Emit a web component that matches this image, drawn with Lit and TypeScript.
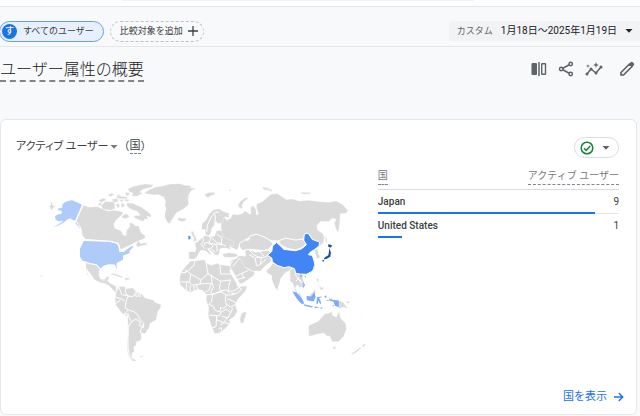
import { LitElement, html, css, svg } from "lit";
import { customElement } from "lit/decorators.js";

interface Row {
  country: string;
  users: number;
}

const ROWS: Row[] = [
  { country: "Japan", users: 9 },
  { country: "United States", users: 1 },
];

/* Land areas, grouped by region; every region has its own origin. */
@customElement("world-map")
export class WorldMap extends LitElement {
  static styles = css`
    :host { display: block; }
    svg { display: block; width: 100%; height: auto; }
    .land { fill: #dadada; }
    .soft { fill: #aecbfa; }
    .mid { fill: #7baaf7; }
    .strong { fill: #4285f4; }
    .deep { fill: #174ea6; }
    .edge { fill: none; stroke: #fff; stroke-width: 3; stroke-linejoin: round; }
    .land, .strong, .soft { stroke: #fff; stroke-width: 1; stroke-linejoin: round; }
    .rim { stroke: #fff; stroke-width: 3; }
  `;

  render() {
    return html`<svg viewBox="0 0 990 570" role="img" aria-label="国別アクティブ ユーザー">
      ${this.northAmerica()} ${this.southAmerica()} ${this.asia()} ${this.europe()} ${this.africa()} ${this.oceania()}
    </svg>`;
  }

  private northAmerica() {
    return svg`
      <path class="land" d="M27 94l6-4 0-10 4 2 0 8 9 4-7 5-2 7-5-2-1-6z"/>
      <path class="soft" d="M127 89L106 138 99 136 92 131 82 135 72 143 58 151 38 158 62 144 69 138 55 140 46 133 45 124 52 119 64 117 66 109 55 106 53 100 66 99 67 88 78 80 96 75 112 82z"/>
      <path class="soft" d="M108 140l8 5 5 19-6-9-8-9z"/>
      <path class="land rim" d="M130 90L150 96 172 94 190 102 205 108 222 105 240 108 252 112 246 122 230 136 223 148 226 160 245 167 251 180 258 182 260 166 270 155 268 143 278 144 286 152 297 152 305 172 318 184 316 192 298 199 285 205 272 212 242 226 236 206 215 200 136 194 127 182 122 158 108 139z"/>
      <path class="land" d="M296 198l6 8 16-2 6 6-14 2-18 5-3-7zM176 76l16-7 8 6-16 8zM184 92l12-12 28 1 2 20-14 5-22-3zM176 86l10-4-2 10-8 0zM202 60l14-5 8 4-12 6zM216 74l16-4 4 10-14 4zM232 58l14 2-12 5zM238 74l14 0-6 8zM254 72l14 2-2 6-10-2zM228 88l10-2 2 10-6 4zM244 86l8-1 4 10-10 3zM230 62l16 2 20 2-8 6-26-2z"/>
      <path class="land" d="M264 42l18-8 34-7 26 2-6 8-26 6-10 8 10 3-18 10-16-1 4-8-10-4zM258 52l14 3-8 8-6-2z"/>
      <path class="land" d="M262 84l18 1 12 6 14 6 16 12 12 10 0 8-12-3 4 10-10-2-6 8-14-6-14-6 4-6 16 0-8-12-18-6-10-6-6-8z"/>
      <path class="land" d="M246 124l12-8 12 8-8 6-10 2z"/>
      <path class="soft rim" d="M131 197L210 200 233 206 239 220 240 230 253 230 262 222 277 212 283 214 277 223 270 229 272 234 264 239 252 243 251 256 232 266 232 287 228 284 225 271 208 270 192 274 184 284 176 278 170 270 152 268 138 262 128 260 119 246 119 222z"/>
      <path class="land rim" d="M136 263l15 4 18 3 12 14-3 14 5 15 12 0 6-8 10 0-6 13 3 9 10 2-3 8-15-7-21-6-16-8-6-10-8-11-8-10 4 14 8 16-4-2-9-15z"/>
      <path class="land" d="M208 302l14-6 20 7 10 4-6 2-24-8zM254 310l12 0 6 4-16 3zM188 318l12-2 12 10 18 10-1 14 12 10-6 0-14-12-14-16-10-4z"/>
      <path class="land" d="M313 55l17-11 18-8 22-3 22-6 30-1 14 5 22 2-8 5 20 3-14 6-8 12-2 14 2 14-6 8-14 10-16 8-10 14-8 14-4 6-8-6-6-13 0-12 4-14-4-10 2-14-6-12-16-7-14 1z"/>
      <path class="land" d="M414 130l7-3 4 4 14-2 1 7-12 5-12-4z"/>
      <path class="land" d="M2 300l5 4-4 4z"/>`;
  }

  private southAmerica() {
    return svg`<g transform="translate(120 270)">
      <path class="land" d="M110 82L118 66 134 66 138 72 160 70 168 80 188 90 196 100 220 106 228 114 244 120 243 130 234 142 230 166 212 176 208 190 196 208 184 208 186 222 180 230 170 232 170 242 162 248 164 260 156 268 158 280 172 290 160 290 150 280 144 266 142 240 145 210 144 190 143 156 128 148 118 134 108 122 106 102z"/>
      <path class="land" d="M180 276l10-2 0 4-8 1z"/>
      <path class="edge" d="M118 68l8 22 20 4-6 14-4 22 10 6-14 14 14-2-4 15 4 30-1 30 0 28 4 20 10 14M108 98l16 4 12 8M108 118l14-12M140 70l-4 12 8 12 16 2 8-12M170 82l-2 12 6 2 4-12M182 88l-2 10M146 136l18 6 14 14 0 6 14 14 0 14-12-6 2-12-14-8-12 8-6-10-4-10M156 170l-10 18M192 178l-8 16-2 10 14 6"/>
    </g>`;
  }

  private asia() {
    return svg`<g transform="translate(630 0)">
      <path class="land" d="M-90 108L-76 110-62 118-60 127-76 126-68 136-56 130-50 118-36 120-20 116-12 108 0 118 6 116 4 98 12 92 20 104 22 120 28 118 22 100 22 88 40 80 58 64 66 58 84 56 100 66 112 74 130 72 150 78 180 76 210 80 240 82 262 78 280 88 298 108 290 116 274 116 272 150 268 174 260 160 256 144 262 134 250 130 240 140 215 140 204 152 206 166 222 176 226 190 222 206 212 212 206 200 190 196 182 178 170 178 162 192 140 196 110 190 86 198 62 196 44 186 20 178 4 184-28 206-36 226-62 214-72 200-84 188-84 165-86 140-82 125z"/>
      <path class="land" d="M-34 92l8-14 16-10 8 2-14 10-6 12 2 8-8 0zM40 36l14 2 16 8-6 3-22-6zM156 52l28 1-2 5-24-1zM228 178l6 16 1 14-5-10z"/>
      <path class="land rim" d="M-30 206L-14 196-2 196 2 184 22 178 44 186 64 198 72 208 58 224 44 228 26 226-4 224-18 228-28 220z"/>
      <path class="land rim" d="M88 198l22-8 30 6 20-3 12 13-12 12-20 8-28-6-16-8z"/>
      <path class="land rim" d="M-14 226l14-2 20 8 22-4 14-2 10 6-10 8 10 10 0 12-20 14-12 14-24 0-26-14-12-18-12-12 14-4 14 2z"/>
      <path class="land rim" d="M50 288l12-10 8-14 14 8 20 6 16-2 14 4-6 14-10-4-12 8-10 14-4 14-6 20-8-4-10-24-2-16-10-4z"/>
      <path class="land rim" d="M122 286l12-10 8 18 8 6 12-2 0 12 4 16-6 12-8 2-8-8-4 8 8 20-8-4-6-18-4-12-8-6z"/>
      <path class="edge" d="M-2 224l18 18 20 8M0 240l18 10 4 24M22 248l24 0 12-8M36 250l-2 18M24 274l14-8 14-14M138 298l8 12 10 12M140 320l8-8 10 14M30 230l14 14"/>
      <path class="strong rim" d="M82 203L96 215 104 224 140 228 158 222 172 210 164 196 166 177 178 176 190 194 212 202 210 214 196 225 184 232 178 240 190 242 196 262 198 274 190 290 172 299 152 298 140 296 136 282 120 276 105 279 84 272 70 262 68 250 55 242 68 230 70 214z"/>
      <path class="strong" d="M152 299l7 2-4 5zM167 303l4 2-3 6z"/>
      <path class="land" d="M196 226l10-4 2 14 6 12-10 4-4-12zM194 274l4 6-4 8z"/>
      <path class="deep" d="M238 208l12 4-4 6-8-1zM241 220l5 14-2 12-12 7-8 1 4-6 10-6 2-10zM220 255l6 2-4 6z"/>
    </g>`;
  }

  private europe() {
    return svg`<g transform="translate(390 0)">
      <path class="land" d="M96 164l2-18 12-10 10-20 14-12 16-2 12 8 18 6-2 12-12-2-4 4-3 14-14 2-6-8-2 14-10 8-2 14-8 10-8-4-2-16z"/>
      <path class="land" d="M76 206l12-8 10-10 8-6 14 4 16-2 6-16 14-2 6 20 20 8 12 8 0 10-14 2 4 10-14-4-12 0-8 4 0 12-6 6-8-2-6-8-8-4-2-8-6 2 10 14 0 6-16-14-12-2-6 6-10 18-10 4-12-2 0-22 20 0 2-10z"/>
      <path class="land" d="M158 238l20-4 22 2 6 8-14 4-26 0z"/>
      <path class="land" d="M64 170l8 0 2 10 6 8 2 10-12 2 4-10-6-8zM106 58l12-5 18 0 0 6-14 4-6 6-8-6zM278 36l14 4 6 4-10 2zM298 44l14 2-6 4zM178 44l8 2-6 3z"/>
      <path class="strong" d="M56 184l6-2 2 10-7 3z"/>
      <path class="edge" d="M112 172l2-22 12-24 12-14 12 0M128 168l8-18 2-26-4-12M120 184l4 8-6 14 12 4M100 186l2 14-8 8 12 14M118 202l-14 4 2 8M142 178l16 10-2 20 14 6M126 188l16 16 14 2M118 206l20 2 6 12-2 10M140 208l18 2M132 212l-8 10 14 10M58 228l20 2"/>
    </g>`;
  }

  private africa() {
    return svg`<g transform="translate(390 210)">
      <path class="land" d="M52 62L62 50 78 48 105 45 110 55 126 62 142 56 155 60 182 64 186 76 180 76 192 100 204 118 210 126 234 124 228 140 206 164 198 180 204 200 196 215 180 226 182 236 168 252 150 266 136 268 128 250 116 214 118 190 110 165 112 150 100 138 86 134 62 144 48 136 32 120 30 108 34 84 48 66z"/>
      <path class="land" d="M216 208l12-8 3 6-8 28-8 4-3-14z"/>
      <path class="land" d="M184 48l20-8 10 4 12 22 14 10 16 6-2 10-30 22-12 4-12-22-14-24-4-12z"/>
      <path class="edge" d="M76 50l-2 12-26 22M34 84l14 0 0-8 16 12-4 24-28 0M64 88l30 18 22-18-6-34M116 88l38 22 30-4M152 60l2 28 34 0M94 106l-2 12-26 4-6-10M52 112l-2 26M62 122l0 22M74 122l0 18M82 120l2 18M92 118l34-2-8 22-10 4M126 90l2 26 4 10-8 18 8 6 24-12 16-2 8 10M154 110l-4 22 8 10M184 106l-6 18 0 16 14 0 16-10-6-12M206 126l12 8-18 14-14-2M112 150l18 0-4 22-8 8 12 4 8 14 14 4 2-14M130 148l24-6 16 8-2 16 4 18-12 8-8-4M170 152l24-2M174 162l26 12M170 178l14 10 14-8M118 212l32 2 6-12 16-8 12 10-8 16-18-4M142 214l-2 32-14 6M142 226l20 8 12-14M152 242l12-8 16 4M190 190l-6 16M148 252l8-2 0 8M182 62l8-14M190 66l20-24M196 96l22-10 18-8M218 86l6 16M200 106l28-8"/>
    </g>`;
  }

  private oceania() {
    return svg`<g transform="translate(660 270)">
      <path class="land" d="M148 186L152 182 178 170 188 158 198 148 208 146 218 142 222 154 232 158 240 140 246 162 260 176 263 194 254 216 238 232 220 232 212 214 206 216 194 206 170 210 150 216z"/>
      <path class="land" d="M222 248l10-2-3 8-6 0zM312 240l8-3-2 8-8 5zM304 249l3 3-18 14-12 6 1-4zM54 70l5 6-4 3zM152 92l8-8 8-10 2 10-6 12-10 2zM172 40l7 4 0 10-5-6zM182 62l6 8 6-4-2 10-10-2zM240 108l14 6 6 10 8 8-14-4-14 4zM260 112l14-2-6 8zM344 158l8-6-4 7zM306 148l4 6-3 0zM116 82l8 6 4 12-8-8z"/>
      <path class="mid" d="M100 80l12 4 14 14 8 14 0 7-8-2-12-14-8-12zM142 94l14 2 10-13 4 14-6 14-20-4zM134 119l14 3 14 4-4 3-22-5zM166 126l16 2-14 3zM184 130l8-2-6 6zM174 98l16-2-10 6 4 4 3 14-5-4-4-8-2 12-4-4zM196 94l6-1 0 8-4-2zM200 106l10 0-2 3zM210 102l14 4 16 2 0 20-12-4-4-12-12-4zM222 120l3 4-4 2zM125 32l4 5-4 2zM132 50l6 12-6 8-2-3 3-6z"/>
    </g>`;
  }
}

@customElement("app-root")
export class AppRoot extends LitElement {
  static styles = css`
    :host {
      display: flex; flex-direction: column; min-height: 100vh; box-sizing: border-box;
      padding-bottom: 1px; background: #f8f9fa; color: #3c4043; overflow: hidden;
      font-family: Roboto, "Noto Sans CJK JP", sans-serif; font-size: 10px; line-height: 16px;
    }
    button { font: inherit; color: inherit; margin: 0; padding: 0; border: 0; background: none; display: flex; align-items: center; cursor: pointer; }
    svg { display: block; flex: none; }
    .top { height: 6px; background: #fff; border-bottom: 1px solid #e4e6e9; }
    .search { height: 1px; width: 55%; margin-left: 19%; background: #f1f3f4; }
    .filters { display: flex; align-items: center; gap: 6px; height: 30px; padding-top: 9px; border-bottom: 1px solid #e4e6e9; }
    .chip { box-sizing: border-box; height: 21px; border-radius: 11px; font-size: 9px; color: #3c4043; white-space: nowrap; }
    .all { gap: 6px; margin-left: -1px; padding: 0 9px 0 2px; border: 1px solid #669df6; background: #e8f0fe; }
    .badge { width: 15px; height: 15px; line-height: 15px; border-radius: 8px; background: #1a73e8; color: #fff; text-align: center; font-weight: 500; }
    .add { gap: 5px; padding: 0 5px 0 9px; border: 1px dashed #bdc1c6; }
    .date { margin-left: auto; height: 20px; padding: 0 7px 0 8px; gap: 8px; background: #f1f3f4; border-radius: 4px 0 0 4px; color: #202124; white-space: nowrap; }
    .date small { font-size: 9px; color: #5f6368; }
    .heading { display: flex; align-items: center; height: 72px; box-sizing: border-box; padding: 0 5px 28px 0; gap: 11px; color: #5f6368; }
    h1 { margin: 0 auto 0 0; font-family: "Noto Sans CJK JP", sans-serif; font-size: 16px; line-height: 24px; font-weight: 300; color: #202124; border-bottom: 2px dashed #80868b; }
    .edit { margin-left: 5px; }
    .card { flex: 1; display: flex; flex-direction: column; box-sizing: border-box; margin-right: 3px; padding: 17px 17px 9px 15px; background: #fff; border: 1px solid #e4e6e9; border-radius: 6px; }
    .cardhead { display: flex; justify-content: space-between; align-items: center; height: 21px; }
    h2 { display: flex; align-items: center; margin: 0; padding-bottom: 2px; gap: 1px; font-size: 11px; line-height: 16px; font-weight: 400; }
    .metric { font-feature-settings: "palt"; }
    h2 svg { color: #757a80; }
    .dim { border-bottom: 1px dashed #80868b; line-height: 14px; }
    .by { display: flex; align-items: center; }
    .status { box-sizing: border-box; height: 21px; width: 45px; padding: 0 8px 0 5px; justify-content: space-between; border: 1px solid #dadce0; border-radius: 11px; color: #5f6368; }
    .body { display: grid; grid-template-columns: 1fr 40%; column-gap: 9px; align-items: start; flex: 1; }
    world-map { margin: 17px 0 0 24px; }
    table { width: 100%; border-collapse: collapse; margin-top: 10px; }
    th, td { padding: 0; text-align: left; }
    th:last-child, td:last-child { text-align: right; }
    thead th { height: 21px; vertical-align: top; font-weight: 400; color: #757a80; border-bottom: 1px solid #dadce0; }
    thead span { display: inline-block; line-height: 16px; border-bottom: 1px dashed #80868b; }
    tbody th { font-weight: 500; }
    tbody th, tbody td { height: 24px; box-sizing: border-box; vertical-align: top; padding-top: 4px; }
    tbody tr { background: linear-gradient(#1a73e8, #1a73e8) left bottom / var(--share) 2px no-repeat; }
    tbody tr:first-child { background: linear-gradient(#1a73e8, #1a73e8) left bottom / var(--share) 2px no-repeat, linear-gradient(#e4e6e9, #e4e6e9) left bottom / 100% 1px no-repeat; }
    .more { display: flex; align-items: center; gap: 6px; align-self: flex-end; margin-right: -5px; font-size: 11px; color: #1a73e8; text-decoration: none; }
  `;

  private caret() {
    return svg`<svg width="8" height="4" viewBox="0 0 8 4" aria-hidden="true"><path d="M.5 0h7L4 3.800z" fill="currentColor"/></svg>`;
  }

  render() {
    return html`
      <header class="top"><div class="search"></div></header>
      <nav class="filters">
        <button class="chip all"><span class="badge">す</span>すべてのユーザー</button>
        <button class="chip add">比較対象を追加
          <svg width="10" height="10" viewBox="0 0 10 10"><path d="M5 0v10M0 5h10" stroke="#3c4043" stroke-width="1.3"/></svg>
        </button>
        <button class="date"><small>カスタム</small><span>1月18日～2025年1月19日</span>${this.caret()}</button>
      </nav>
      <div class="heading">
        <h1>ユーザー属性の概要</h1>
        <button aria-label="比較を編集"><svg width="16" height="16" viewBox="0 0 16 16"><rect x="0.5" y="2" width="5.5" height="12" rx="1" fill="currentColor"/><path d="M8 1v14" stroke="currentColor" stroke-width="1.5"/><rect x="10.7" y="2.7" width="3.8" height="10.6" rx="0.5" fill="none" stroke="currentColor" stroke-width="1.4"/></svg></button>
        <button aria-label="共有"><svg width="16" height="16" viewBox="0 0 16 16" fill="none" stroke="currentColor" stroke-width="1.5"><path d="M3.5 8l9-5M3.5 8l9 5"/><g fill="#f8f9fa"><circle cx="3.2" cy="8" r="1.7"/><circle cx="12.7" cy="3" r="1.7"/><circle cx="12.7" cy="13" r="1.7"/></g></svg></button>
        <button aria-label="インサイト"><svg width="18" height="16" viewBox="0 0 18 16"><path d="M2 13l4-5 5 4 5-6" fill="none" stroke="currentColor" stroke-width="1.5"/><g fill="currentColor"><circle cx="2" cy="13" r="1.5"/><circle cx="6" cy="8" r="1.5"/><circle cx="11" cy="12" r="1.5"/><circle cx="16" cy="6" r="1.5"/><path d="M11 1l.8 2.2L14 4l-2.2.8L11 7l-.8-2.2L8 4l2.2-.8zM3 3l.5 1.5L5 5l-1.5.5L3 7l-.5-1.5L1 5l1.5-.5z"/></g></svg></button>
        <button class="edit" aria-label="編集"><svg width="16" height="16" viewBox="0 0 16 16"><path d="M2 14v-2.5L10.5 3l2.5 2.5L4.5 14z" fill="none" stroke="currentColor" stroke-width="1.7" stroke-linejoin="round"/><path d="M10 3l2-2q.7-.5 1.4 0L15 2.6q.5.7 0 1.4l-2 2z" fill="currentColor"/></svg></button>
      </div>
      <main class="card">
        <div class="cardhead">
          <h2><span class="metric">アクティブ ユーザー</span>${this.caret()}<span class="by">（<span class="dim">国</span>）</span></h2>
          <button class="status" aria-label="データの状態">
            <svg width="14" height="14" viewBox="0 0 14 14" fill="none" stroke="#188038" stroke-width="1.5"><circle cx="7" cy="7" r="5.8"/><path d="M4 7.2l2.2 2.2L10.2 5"/></svg>
            ${this.caret()}
          </button>
        </div>
        <div class="body">
          <world-map></world-map>
          <table>
            <thead><tr><th scope="col"><span>国</span></th><th scope="col"><span>アクティブ ユーザー</span></th></tr></thead>
            <tbody>
              ${ROWS.map((r) => html`<tr style="--share:${r.users * 10}%"><th scope="row">${r.country}</th><td>${r.users}</td></tr>`)}
            </tbody>
          </table>
        </div>
        <a class="more" href="#countries">国を表示
          <svg width="11" height="10" viewBox="0 0 11 10"><path d="M1 5h8.5M5.8 1l4 4-4 4" fill="none" stroke="currentColor" stroke-width="1.4"/></svg>
        </a>
      </main>
    `;
  }
}
